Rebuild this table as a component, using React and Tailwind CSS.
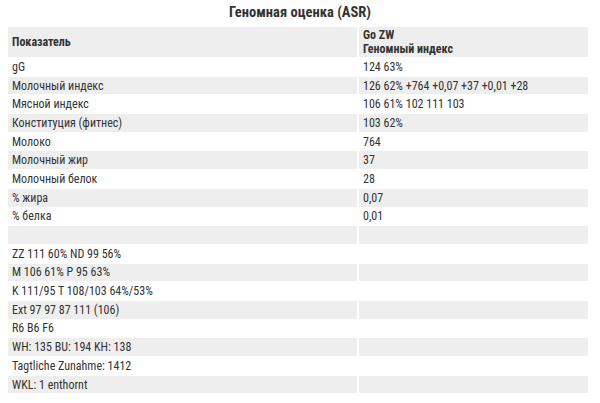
import React from "react";

const rows = [
  ["gG", "124 63%"],
  ["Молочный индекс", "126 62% +764 +0,07 +37 +0,01 +28"],
  ["Мясной индекс", "106 61% 102 111 103"],
  ["Конституция (фитнес)", "103 62%"],
  ["Молоко", "764"],
  ["Молочный жир", "37"],
  ["Молочный белок", "28"],
  ["% жира", "0,07"],
  ["% белка", "0,01"],
  ["", ""],
  ["ZZ 111 60% ND 99 56%", ""],
  ["M 106 61% P 95 63%", ""],
  ["K 111/95 T 108/103 64%/53%", ""],
  ["Ext 97 97 87 111 (106)", ""],
  ["R6 B6 F6", ""],
  ["WH: 135 BU: 194 KH: 138", ""],
  ["Tagtliche Zunahme: 1412", ""],
  ["WKL: 1 enthornt", ""],
];

export default function App(){
  return (
    <div className="w-[600px] h-[403px] bg-white text-[#333] overflow-hidden" style={{fontFamily:'"Roboto Condensed", Roboto, sans-serif'}}>
      <div className="text-center font-bold text-[14.5px] leading-[16px] pt-[5px] pb-[5px]">Геномная оценка (ASR)</div>
      <table className="ml-[6px] w-[584px] border-separate border-spacing-x-[2px] border-spacing-y-px text-[12px] leading-[14px]">
        <thead>
          <tr className="bg-[#eeeeee] font-bold text-left">
            <th className="w-[349px] px-[4px] py-0 h-[30px] align-middle">Показатель</th>
            <th className="px-[4px] py-0 align-middle">Go ZW<br/>Геномный индекс</th>
          </tr>
        </thead>
        <tbody>
          {rows.map((r, i) => (
            <tr key={i} className={i % 2 ? "bg-[#eeeeee]" : "bg-white"}>
              <td className="px-[4px] h-[17.7px] py-0">{r[0]}</td>
              <td className="px-[4px] h-[17.7px] py-0">{r[1]}</td>
            </tr>
          ))}
        </tbody>
      </table>
    </div>
  );
}
